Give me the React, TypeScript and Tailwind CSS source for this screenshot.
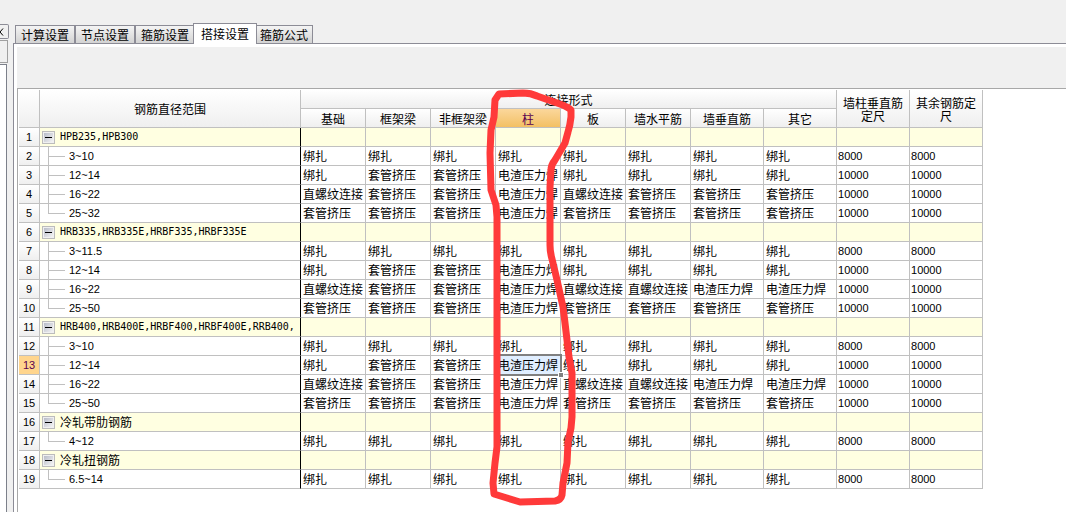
import type { ReactNode } from "react";

type Row = { name: string; group?: boolean; last?: boolean; cells?: string[]; length?: string };

const B = "绑扎";
const T = "套管挤压";
const Z = "直螺纹连接";
const D = "电渣压力焊";

const TABS = ["计算设置", "节点设置", "箍筋设置", "搭接设置", "箍筋公式"];
const ACTIVE_TAB = "搭接设置";

const JOINTS = ["基础", "框架梁", "非框架梁", "柱", "板", "墙水平筋", "墙垂直筋", "其它"];
const SELECTED_COL = 3;
const SELECTED_ROW = 12;

const ROWS: Row[] = [
  { name: "HPB235,HPB300", group: true },
  { name: "3~10", cells: [B, B, B, B, B, B, B, B], length: "8000" },
  { name: "12~14", cells: [B, T, T, D, B, B, B, B], length: "10000" },
  { name: "16~22", cells: [Z, T, T, D, Z, T, T, T], length: "10000" },
  { name: "25~32", cells: [T, T, T, D, T, T, T, T], length: "10000", last: true },
  { name: "HRB335,HRB335E,HRBF335,HRBF335E", group: true },
  { name: "3~11.5", cells: [B, B, B, B, B, B, B, B], length: "8000" },
  { name: "12~14", cells: [B, T, T, D, B, B, B, B], length: "10000" },
  { name: "16~22", cells: [Z, T, T, D, Z, Z, D, D], length: "10000" },
  { name: "25~50", cells: [T, T, T, D, T, T, T, T], length: "10000", last: true },
  { name: "HRB400,HRB400E,HRBF400,HRBF400E,RRB400,", group: true },
  { name: "3~10", cells: [B, B, B, B, B, B, B, B], length: "8000" },
  { name: "12~14", cells: [B, T, T, D, B, B, B, B], length: "10000" },
  { name: "16~22", cells: [Z, T, T, D, Z, Z, D, D], length: "10000" },
  { name: "25~50", cells: [T, T, T, D, T, T, T, T], length: "10000", last: true },
  { name: "冷轧带肋钢筋", group: true },
  { name: "4~12", cells: [B, B, B, B, B, B, B, B], length: "8000", last: true },
  { name: "冷轧扭钢筋", group: true },
  { name: "6.5~14", cells: [B, B, B, B, B, B, B, B], length: "8000", last: true },
];

const CODE = "font-['DejaVu_Sans_Mono',monospace] text-[10px]";
const DIGITS = "font-['Liberation_Sans',sans-serif] text-[11px]";

function Tab({ label }: { label: string }) {
  if (label === ACTIVE_TAB) {
    return (
      <button
        role="tab"
        aria-selected
        className="z-10 -mx-[2px] -mb-px h-[21px] w-16 border border-b-0 border-[#8c8c96] bg-white leading-5"
      >
        {label}
      </button>
    );
  }
  return (
    <button
      role="tab"
      aria-selected={false}
      className="h-[18px] w-[60px] border border-b-0 border-[#8c8c96] bg-linear-to-b from-[#f4f4f4] to-[#d3d3d3] leading-[18px] last:w-[58px]"
    >
      {label}
    </button>
  );
}

function HeadCell({ children, selected, ...rest }: { children?: ReactNode; selected?: boolean; colSpan?: number; rowSpan?: number }) {
  return (
    <th
      {...rest}
      className={`border-r border-b border-[#c0c0c0] bg-linear-to-b p-0 text-center leading-[13px] font-normal ${
        selected ? "from-[#fbd79b] to-[#f3c063] text-[#5a0050]" : "from-white to-[#efefef]"
      }`}
    >
      {children}
    </th>
  );
}

function NameCell({ row }: { row: Row }) {
  const latin = /^[\x20-\x7e]+$/.test(row.name);
  const font = !latin ? "" : row.group ? CODE : DIGITS;
  return (
    <td className={`border-r border-b border-r-black border-b-[#c0c0c0] p-0 ${row.group ? "bg-[#ffffe1]" : ""}`}>
      <div className={`relative flex h-[18px] items-center ${row.group ? "pl-[2px]" : "pl-[29px]"}`}>
        {row.group ? (
          <button
            aria-label="折叠"
            className="mr-[5px] flex size-[13px] items-center justify-center border border-[#bcbcbc] bg-[#f0f0f0]"
          >
            <span className="flex size-[9px] items-center justify-center bg-linear-to-br from-[#b8bcc8] to-[#f4f4f4]">
              <span className="h-px w-[7px] bg-black" />
            </span>
          </button>
        ) : (
          <>
            <span className={`absolute top-0 left-2 w-px bg-[#c0c0c0] ${row.last ? "h-[10px]" : "h-[19px]"}`} />
            <span className="absolute top-[9px] left-2 h-px w-[17px] bg-[#c0c0c0]" />
          </>
        )}
        <span className={font}>{row.name}</span>
      </div>
    </td>
  );
}

function RebarTable() {
  return (
    <table className="w-[964px] table-fixed border-separate border-spacing-0 whitespace-nowrap">
      <colgroup>
        <col className="w-[21px]" />
        <col className="w-[261px]" />
        {JOINTS.map((j, i) => (
          <col key={j} className={i < 6 ? "w-[65px]" : "w-[73px]"} />
        ))}
        <col className="w-[73px]" />
        <col className="w-[73px]" />
      </colgroup>
      <thead>
        <tr className="h-[19px]">
          <HeadCell rowSpan={2} />
          <HeadCell rowSpan={2}>钢筋直径范围</HeadCell>
          <HeadCell colSpan={8}>连接形式</HeadCell>
          <HeadCell rowSpan={2}>
            墙柱垂直筋
            <br />
            定尺
          </HeadCell>
          <HeadCell rowSpan={2}>
            其余钢筋定
            <br />尺
          </HeadCell>
        </tr>
        <tr className="h-[19px]">
          {JOINTS.map((j, i) => (
            <HeadCell key={j} selected={i === SELECTED_COL}>
              {j}
            </HeadCell>
          ))}
        </tr>
      </thead>
      <tbody>
        {ROWS.map((row, r) => (
          <tr key={r} className="h-[19px]">
            <th
              className={`border-r border-b border-[#c0c0c0] p-0 text-center font-normal ${DIGITS} ${
                r === SELECTED_ROW ? "bg-[#ffd58d] text-[#5a0050]" : "bg-linear-to-b from-white to-[#efefef]"
              }`}
            >
              {r + 1}
            </th>
            <NameCell row={row} />
            {JOINTS.map((j, c) => {
              const selected = r === SELECTED_ROW && c === SELECTED_COL;
              return (
                <td
                  key={j}
                  className={`border-r border-b border-[#c0c0c0] p-0 pl-[2px] ${row.group ? "bg-[#ffffe1]" : ""} ${
                    selected ? "relative z-10 bg-[#e0eeff]" : ""
                  }`}
                >
                  {row.cells?.[c]}
                  {selected && (
                    <>
                      <span className="absolute -inset-[2px] border-2 border-[#808080]" />
                      <span className="absolute -right-[4px] -bottom-[4px] size-[6px] border border-white bg-[#808080]" />
                    </>
                  )}
                </td>
              );
            })}
            {[0, 1].map((c) => (
              <td
                key={c}
                className={`border-r border-b border-[#c0c0c0] p-0 pl-px ${DIGITS} ${row.group ? "bg-[#ffffe1]" : ""}`}
              >
                {row.length}
              </td>
            ))}
          </tr>
        ))}
      </tbody>
    </table>
  );
}

// Hand-drawn marker loop around the column joint type
function Marker() {
  return (
    <svg
      className="pointer-events-none absolute top-0 left-[468px] z-20"
      width="92"
      height="420"
      viewBox="486 89 92 420"
      fill="none"
      stroke="#ff3a3a"
      strokeWidth="7"
      strokeLinecap="round"
      strokeLinejoin="round"
    >
      <path d="M499 94 L523 93 Q531 93 537 96 L560 104 Q568 107 571 110 L571 117 Q570 126 568 132 L565 143 L555 160 Q551 165 551 170 L550 187 L550 245 Q550 252 552 259 L557 280 L563 307 L565 323 L567 340 L569 357 L572 373 L572 417 L571 428 L568 442 L567 463 L563 483 L562 495 Q561 500 555 501 L520 502 L507 498 L494 494 L493 483 L495 463 L497 447 L497 217 L496 205 L491 190 L490 153 L491 130 L494 117 L495 100 Z" />
    </svg>
  );
}

export default function App() {
  return (
    <div className="flex h-screen overflow-hidden bg-[#f0f0f0] font-['Noto_Sans_CJK_SC',sans-serif] text-[12px] leading-[12px] text-black">
      <aside className="flex w-[13px] flex-col pt-[24px]">
        <button
          aria-label="关闭"
          className="flex h-[15px] w-[9px] items-center overflow-hidden rounded-r-xs border border-l-0 border-[#8c8c96]"
        >
          <svg width="5" height="8" viewBox="0 0 5 8" stroke="#000" fill="none">
            <path d="M-3 0.5 L3 7.5 M3 0.5 L-3 7.5" />
          </svg>
        </button>
        <div className="mt-px h-[23px] w-2 border-y border-r border-[#a0a0a0]" />
        <div className="mt-px w-[7px] grow border-t border-r border-[#7c808a] bg-white" />
      </aside>
      <main className="flex min-w-0 grow flex-col pt-[23px]">
        <div role="tablist" className="flex h-5 items-end pl-[2px]">
          {TABS.map((t) => (
            <Tab key={t} label={t} />
          ))}
        </div>
        <section className="flex grow flex-col border-t border-l border-[#8c8c96] bg-white pt-[3px] pl-[3px]">
          <div className="h-[41px] bg-[#f0f0f0]" />
          <div className="relative grow border-t border-l border-[#a8a8a8] pt-px pl-px">
            <RebarTable />
            <Marker />
          </div>
        </section>
      </main>
    </div>
  );
}
